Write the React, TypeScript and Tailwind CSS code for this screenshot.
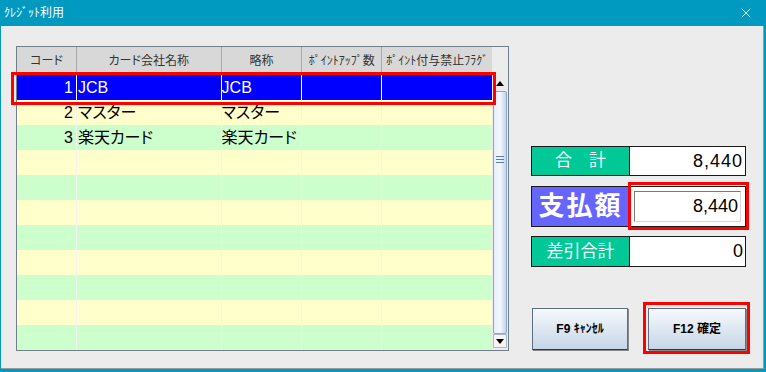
import { X } from 'lucide-react';

const JP = "font-['Liberation_Sans','Noto_Sans_CJK_JP',sans-serif] [font-feature-settings:'palt']";

const COLS = [
    { label: 'コード', w: 'w-[60px]' },
    { label: 'カード会社名称', w: 'w-[145px]' },
    { label: '略称', w: 'w-[81px]' },
    { label: 'ﾎﾟｲﾝﾄｱｯﾌﾟ数', w: 'w-[80px]' },
    { label: 'ﾎﾟｲﾝﾄ付与禁止ﾌﾗｸﾞ', w: 'w-[110px]' },
];

const ROWS = [
    { code: '1', name: 'JCB', short: 'JCB' },
    { code: '2', name: 'マスター', short: 'マスター' },
    { code: '3', name: '楽天カード', short: '楽天カード' },
    ...Array.from({ length: 8 }, () => ({ code: '', name: '', short: '' })),
];

function GridRow({ row, index }: { row: typeof ROWS[number]; index: number }) {
    const selected = index === 0;
    const bg = selected ? 'bg-[#0000ff] text-white' : index % 2 === 1 ? 'bg-[#ffffcc] text-black' : 'bg-[#ccffcc] text-black';
    const line = selected ? 'border-white' : 'border-[#f2f2f2]';
    return (
        <div className={`flex h-[25px] shrink-0 whitespace-nowrap text-[16px] leading-[25px] ${bg}`}>
            <div className={`w-[60px] border-r ${line} pr-[3px] text-right`}>{row.code}</div>
            <div className={`w-[145px] border-r ${line} pl-[1px]`}>{row.name}</div>
            <div className={`w-[81px] overflow-hidden border-r ${line}`}>{row.short}</div>
            <div className={`w-[80px] border-r ${line}`} />
            <div className="w-[110px]" />
        </div>
    );
}

function ScrollBar() {
    return (
        <div className="flex w-[16px] flex-col bg-[#ececec]">
            <div className="h-[28px]" />
            <div className="flex h-[16px] items-center justify-center">
                <div className="h-0 w-0 border-x-[4px] border-b-[5px] border-x-transparent border-b-black" />
            </div>
            <div className="mx-[1px] flex flex-1 flex-col items-center rounded-[2px] border border-[#8aa6c8] bg-gradient-to-r from-[#e6eef8] via-[#f4f8fc] to-[#c4d6ec]">
                <div className="mt-[64px] flex flex-col gap-[2px]">
                    <div className="h-[1px] w-[8px] bg-[#5a7ab0]" />
                    <div className="h-[1px] w-[8px] bg-[#5a7ab0]" />
                    <div className="h-[1px] w-[8px] bg-[#5a7ab0]" />
                </div>
            </div>
            <div className="mx-[1px] mb-[2px] flex h-[14px] items-center justify-center border border-[#b0b8c4] bg-[#f4f4f4]">
                <div className="h-0 w-0 border-x-[4px] border-t-[5px] border-x-transparent border-t-black" />
            </div>
        </div>
    );
}

function Label({ text, tone }: { text: string; tone: 'green' | 'blue' }) {
    return tone === 'green' ? (
        <div className="flex w-[99px] items-center justify-center border border-[#1a1a1a] bg-[#00c896] text-[17px] text-white">{text}</div>
    ) : (
        <div className="flex w-[99px] items-center justify-center border border-[#1a1a1a] bg-[#6666ff] text-[26px] font-bold tracking-[2px] text-white">{text}</div>
    );
}

function Button({ text }: { text: string }) {
    return (
        <div className="flex h-[42px] items-center justify-center border border-[#5e6e7c] border-b-[#303840] bg-gradient-to-b from-[#f6f9fc] to-[#c6d6e8] text-[12px] font-bold text-black shadow-[1px_1px_0_#8a8a8a]">
            {text}
        </div>
    );
}

export default function App() {
    return (
        <div className={`flex h-[372px] w-[766px] flex-col bg-[#0099bf] ${JP}`}>
            <div className="flex h-[26px] shrink-0 items-center justify-between pl-[4px] pr-[12px] text-white">
                <span className="text-[12px]">ｸﾚｼﾞｯﾄ利用</span>
                <X className="h-[16px] w-[16px]" strokeWidth={1.2} />
            </div>
            <div className="ml-[1px] flex h-[343px] w-[763px] border-r border-b border-[#9a9a9a] bg-[#ececec] pl-[15px] pt-[20px]">
                <div className="relative flex h-[305px] w-[493px] border border-[#6f7f8c] bg-[#ececec]">
                    <div className="flex w-[476px] flex-col overflow-hidden">
                        <div className="flex h-[28px] shrink-0 border-b border-[#a0a0a0] bg-[#d8d8d8] text-[12px] leading-[28px] text-[#333]">
                            {COLS.map((c, i) => (
                                <div key={c.label} className={`${c.w} ${i < COLS.length - 1 ? 'border-r border-[#a8a8a8]' : ''} text-center`}>
                                    {c.label}
                                </div>
                            ))}
                        </div>
                        {ROWS.map((r, i) => (
                            <GridRow key={i} row={r} index={i} />
                        ))}
                    </div>
                    <ScrollBar />
                    <div className="pointer-events-none absolute -left-[6px] top-[25px] h-[33px] w-[485px] border-[3px] border-[#ff0000]" />
                </div>

                <div className="ml-[22px] flex w-[215px] flex-col pt-[100px]">
                    <div className="flex h-[30px]">
                        <Label text="合　計" tone="green" />
                        <div className="flex flex-1 items-center justify-end border border-l-0 border-[#1a1a1a] bg-white pr-[2px] text-[18px] tracking-[1px]">8,440</div>
                    </div>
                    <div className="mt-[10px] flex h-[41px]">
                        <Label text="支払額" tone="blue" />
                        <div className="relative flex flex-1 border border-l-0 border-[#1a1a1a] bg-white p-[4px]">
                            <div className="flex flex-1 items-center justify-end border border-[#7a7a7a] border-b-[#d8d8d8] border-r-[#d8d8d8] pr-[2px] text-[18px]">8,440</div>
                            <div className="pointer-events-none absolute -left-[2px] -top-[5px] h-[48px] w-[121px] border-[3px] border-[#ff0000]" />
                        </div>
                    </div>
                    <div className="mt-[9px] flex h-[31px]">
                        <Label text="差引合計" tone="green" />
                        <div className="flex flex-1 items-center justify-end border border-l-0 border-[#1a1a1a] bg-white pr-[2px] text-[18px]">0</div>
                    </div>
                    <div className="mt-[41px] flex gap-[20px] pl-[1px]">
                        <div className="w-[96px]">
                            <Button text="F9 ｷｬﾝｾﾙ" />
                        </div>
                        <div className="relative w-[98px]">
                            <Button text="F12 確定" />
                            <div className="pointer-events-none absolute -left-[5px] -top-[6px] h-[52px] w-[107px] border-[3px] border-[#ff0000]" />
                        </div>
                    </div>
                </div>
            </div>
        </div>
    );
}
